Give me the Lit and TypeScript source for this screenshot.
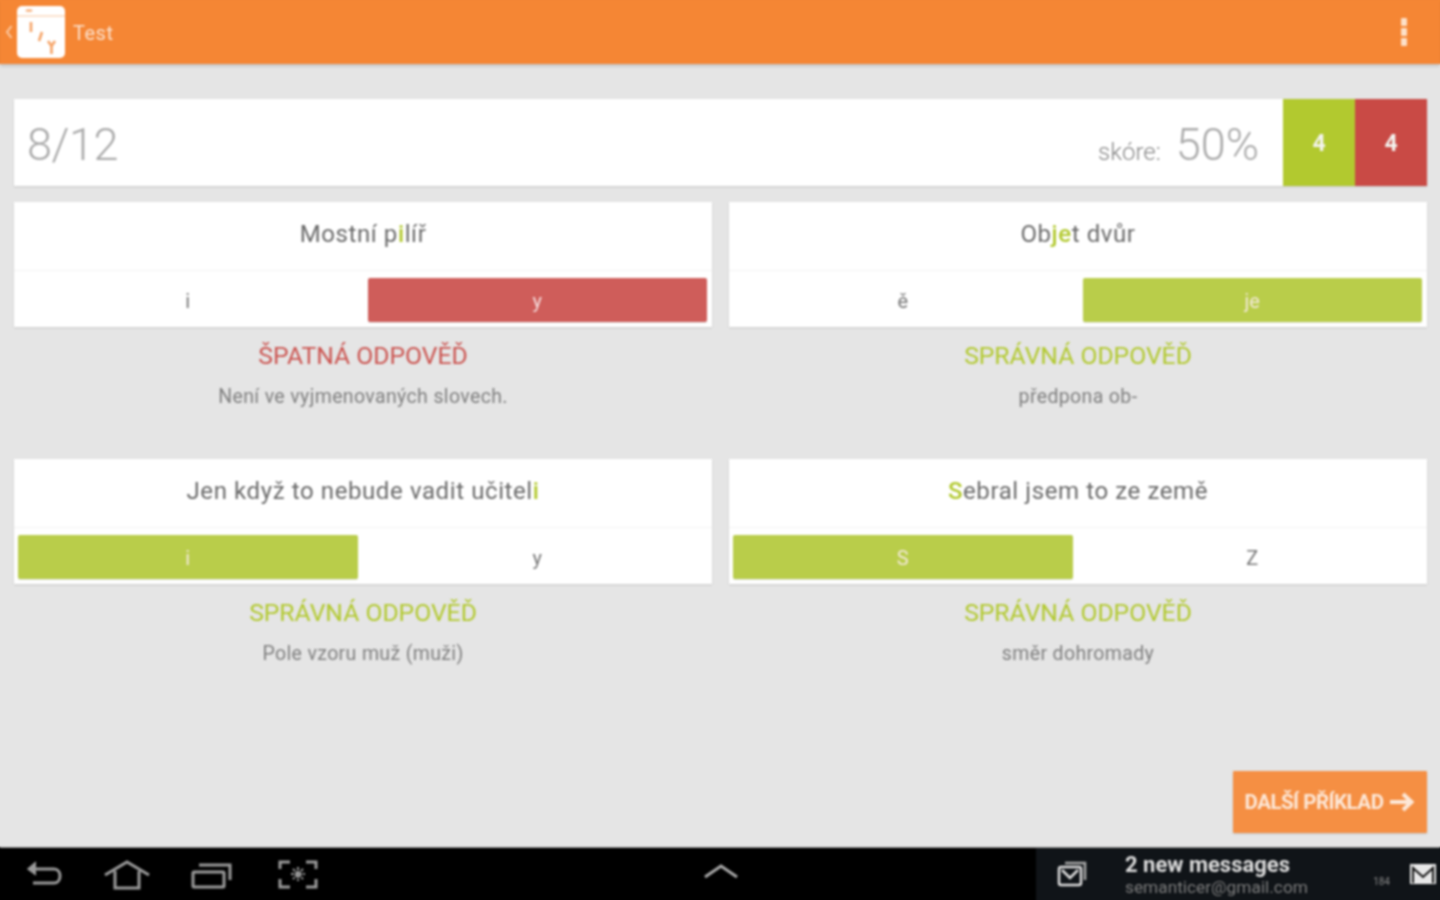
import { LitElement, html, css, svg } from "lit";
import { customElement } from "lit/decorators.js";

interface Part { t: string; hl?: boolean }
interface Card {
  q: Part[];
  opts: [string, string];
  picked: 0 | 1;
  ok: boolean;
  note: string;
}

const CARDS: Card[] = [
  { q: [{ t: "Mostní p" }, { t: "i", hl: true }, { t: "líř" }], opts: ["i", "y"], picked: 1, ok: false, note: "Není ve vyjmenovaných slovech." },
  { q: [{ t: "Ob" }, { t: "je", hl: true }, { t: "t dvůr" }], opts: ["ě", "je"], picked: 1, ok: true, note: "předpona ob-" },
  { q: [{ t: "Jen když to nebude vadit učitel" }, { t: "i", hl: true }], opts: ["i", "y"], picked: 0, ok: true, note: "Pole vzoru muž (muži)" },
  { q: [{ t: "S", hl: true }, { t: "ebral jsem to ze země" }], opts: ["S", "Z"], picked: 0, ok: true, note: "směr dohromady" },
];

@customElement("app-root")
export class AppRoot extends LitElement {
  static styles = css`
    :host {
      display: block;
      width: 1440px;
      height: 900px;
      overflow: hidden;
      font-family: Roboto, "Liberation Sans", sans-serif;
      background: #e5e5e5;
    }
    .screen {
      width: 1440px;
      height: 900px;
      display: flex;
      flex-direction: column;
      filter: blur(0.9px);
    }
    .appbar {
      height: 64px;
      flex: none;
      background: #f58634;
      box-shadow: 0 2px 3px rgba(0, 0, 0, 0.16), 0 -8px 0 #f58634, -8px 0 0 #f58634, 8px 0 0 #f58634, -8px -8px 0 #f58634, 8px -8px 0 #f58634;
      display: flex;
      align-items: center;
      padding: 0 32px 0 5px;
      position: relative;
    }
    .appbar svg { display: block; }
    .chev { margin-right: 3px; }
    .title { font-size: 20px; letter-spacing: 0.5px; margin: 2px 0 0 5px; flex: 1; color: #fce0cb; }
    .main {
      flex: 1;
      display: flex;
      flex-direction: column;
      padding: 35px 13px 14px 14px;
      min-height: 0;
    }
    .score {
      height: 87px;
      flex: none;
      background: #fff;
      box-shadow: 0 1px 2px rgba(0, 0, 0, 0.14);
      display: flex;
      align-items: center;
      padding-left: 13px;
    }
    .progress { font-size: 45px; font-weight: 300; flex: 1; letter-spacing: -0.4px; color: #aaa; margin-top: 3px; }
    .skore { font-size: 24px; font-weight: 300; color: #888; margin: 18px 15px 0 0; }
    .pct { font-size: 45px; font-weight: 300; margin: 3px 24px 0 0; color: #aaa; }
    .tally {
      width: 72px;
      align-self: stretch;
      display: flex;
      align-items: center;
      justify-content: center;
      color: #f4f4f0;
      font-size: 23px;
      font-weight: 700;
      padding-top: 2px;
      box-sizing: border-box;
    }
    .tally.g { background: #b2c92f; }
    .tally.r { background: #c94a45; }
    .grid {
      display: grid;
      grid-template-columns: 698px 698px;
      column-gap: 17px;
      grid-auto-rows: 257px;
      margin-top: 16px;
    }
    .card {
      background: #fff;
      height: 125px;
      box-shadow: 0 1px 2px rgba(0, 0, 0, 0.12);
      display: flex;
      flex-direction: column;
    }
    .q {
      height: 69px;
      flex: none;
      display: flex;
      align-items: center;
      justify-content: center;
      font-size: 24px;
      letter-spacing: 0.6px;
      color: #6a6a6a;
      border-bottom: 1px solid #f2f2f2;
      box-sizing: border-box;
      white-space: pre;
      padding-bottom: 5px;
    }
    .hl { color: #b2c92f; font-weight: 500; }
    .opts {
      flex: 1;
      display: grid;
      grid-template-columns: 1fr 1fr;
      column-gap: 10px;
      padding: 7px 5px 5px 4px;
    }
    .opt {
      display: flex;
      align-items: center;
      justify-content: center;
      font-size: 20px;
      color: #777;
      padding-top: 1px;
    }
    .opt.sel { color: #f3e9d9; border-radius: 2px; box-shadow: 0 1px 1px rgba(0, 0, 0, 0.12); }
    .opt.good { background: #b9cd4a; }
    .opt.bad { background: #cf5d5a; color: #f5dcdc; }
    .below { text-align: center; }
    .verdict { font-size: 24.7px; line-height: 30px; margin-top: 14px; }
    .verdict.good { color: #b2c92f; }
    .verdict.bad { color: #cb5450; }
    .note { font-size: 19.5px; letter-spacing: 0.36px; line-height: 24px; color: #808080; margin-top: 14px; }
    .foot { margin-top: auto; display: flex; justify-content: flex-end; }
    .next {
      width: 194px;
      height: 62px;
      background: #f58f43;
      box-shadow: 0 1px 2px rgba(0, 0, 0, 0.15);
      border-radius: 1px;
      display: flex;
      align-items: center;
      justify-content: center;
      gap: 6px;
      color: #fde8d8;
      font-size: 20.5px;
      font-weight: 700;
      letter-spacing: -0.5px;
      white-space: nowrap;
    }
    .nav {
      height: 53px;
      flex: none;
      background: #000;
      border-top: 1px solid #8a8a8a;
      box-sizing: border-box;
      display: flex;
      position: relative;
      align-items: stretch;
      box-shadow: 0 8px 0 #000, -8px 0 0 #000, 8px 0 0 #000, -8px 8px 0 #000, 8px 8px 0 #000;
    }
    .nav-ic { position: absolute; top: 10px; }
    .tray {
      margin-left: auto;
      width: 404px;
      background: #101418;
      display: flex;
      align-items: center;
      padding-left: 21px;
      box-sizing: border-box;
      box-shadow: 0 8px 0 #101418, 8px 0 0 #101418, 8px 8px 0 #101418;
    }
    .msg { margin-left: 38px; display: flex; flex-direction: column; flex: 1; }
    .msg b { font-size: 22px; line-height: 26px; color: #ddd; font-weight: 700; }
    .msg span { font-size: 17.3px; line-height: 19px; color: #7c7c7c; }
    .count { font-size: 10px; color: #888; margin-right: 19px; margin-top: 14px; }
    .mail { margin-right: 3px; }
  `;

  private logo() {
    return svg`<svg width="52" height="54" viewBox="0 0 52 54">
      <rect x="1" y="1" width="48" height="52" rx="5" fill="#fff"/>
      <path d="M1 11h48" stroke="#fbd9bd" stroke-width="1.500"/>
      <ellipse cx="13" cy="5.500" rx="3.500" ry="1.500" fill="#f8b98a"/>
      <path d="M15 17v10M26 27l-3 9" stroke="#f6a468" stroke-width="2.600" fill="none"/>
      <path d="M32 36l3.500 5 3.500-5M35.500 41v8" stroke="#f6a468" stroke-width="2.600" fill="none"/>
    </svg>`;
  }

  private card(c: Card) {
    return html`<div>
      <div class="card">
        <div class="q">${c.q.map((p) => (p.hl ? html`<span class="hl">${p.t}</span>` : p.t))}</div>
        <div class="opts">
          ${c.opts.map((o, i) => {
            const sel = i === c.picked;
            const cls = sel ? (c.ok ? "opt sel good" : "opt sel bad") : "opt";
            return html`<div class=${cls}>${o}</div>`;
          })}
        </div>
      </div>
      <div class="below">
        <div class="verdict ${c.ok ? "good" : "bad"}">${c.ok ? "SPRÁVNÁ ODPOVĚĎ" : "ŠPATNÁ ODPOVĚĎ"}</div>
        <div class="note">${c.note}</div>
      </div>
    </div>`;
  }

  render() {
    return html`<div class="screen">
      <header class="appbar">
        <svg class="chev" width="8" height="14" viewBox="0 0 8 14"><path d="M6.500 1L2 7l4.500 6" stroke="#fbc9a2" stroke-width="2" fill="none"/></svg>
        ${this.logo()}
        <div class="title">Test</div>
        <svg width="8" height="28" viewBox="0 0 8 28"><g fill="#fde0c8"><rect x="1" y="0" width="6" height="8" rx="1"/><rect x="1" y="10" width="6" height="8" rx="1"/><rect x="1" y="20" width="6" height="8" rx="1"/></g></svg>
      </header>
      <main class="main">
        <section class="score">
          <div class="progress">8/12</div>
          <div class="skore">skóre:</div>
          <div class="pct">50%</div>
          <div class="tally g">4</div>
          <div class="tally r">4</div>
        </section>
        <section class="grid">${CARDS.map((c) => this.card(c))}</section>
        <div class="foot">
          <div class="next">DALŠÍ PŘÍKLAD
            <svg width="26" height="22" viewBox="0 0 26 22"><path d="M1 11h21M14 3l8.500 8-8.500 8" stroke="#fde8d8" stroke-width="4" fill="none"/></svg>
          </div>
        </div>
      </main>
      <footer class="nav">
        <svg class="nav-ic" style="left:24px" width="40" height="34" viewBox="0 0 40 34" fill="none" stroke="#9a9a9a" stroke-width="3"><path d="M5 11h25c8 0 8 14 0 14H9"/><path d="M12 4L4 11l8 6" fill="#9a9a9a" stroke-width="1.500"/></svg>
        <svg class="nav-ic" style="left:103px" width="48" height="34" viewBox="0 0 48 34" fill="none" stroke="#9a9a9a" stroke-width="3"><path d="M2 17L24 4l22 13"/><path d="M12 13v17h24V13"/></svg>
        <svg class="nav-ic" style="left:190px" width="42" height="34" viewBox="0 0 42 34" fill="none" stroke="#9a9a9a" stroke-width="3"><rect x="3" y="14" width="31" height="15" rx="1"/><path d="M9 7h31v15"/></svg>
        <svg class="nav-ic" style="left:278px" width="40" height="34" viewBox="0 0 40 34" fill="none" stroke="#9a9a9a" stroke-width="3"><path d="M2 11V4h10M28 4h10v7M2 21v8h10M38 21v8H28"/><path d="M20 9v14M13 16h14M15 11l10 10M25 11L15 21" stroke-width="2" stroke-dasharray="3 1"/></svg>
        <svg class="nav-ic" style="left:703px;top:14px" width="36" height="20" viewBox="0 0 36 20" fill="none" stroke="#a8a8a8" stroke-width="3"><path d="M2 15L18 4l16 11"/></svg>
        <div class="tray">
          <svg width="30" height="28" viewBox="0 0 30 28" fill="none"><path d="M8 3h20v17" stroke="#a8a8a8" stroke-width="2.500"/><rect x="2" y="7" width="22" height="18" rx="2" stroke="#ddd" stroke-width="2.500"/><path d="M5 10l8 8 8-8" stroke="#ddd" stroke-width="2.500"/></svg>
          <div class="msg"><b>2 new messages</b><span>semanticer@gmail.com</span></div>
          <div class="count">184</div>
          <svg class="mail" width="28" height="22" viewBox="0 0 28 22"><rect x="1" y="1" width="26" height="20" fill="#e8e8e8"/><path d="M4 20V5l10 9 10-9v15" fill="none" stroke="#111" stroke-width="2"/></svg>
        </div>
      </footer>
    </div>`;
  }
}
